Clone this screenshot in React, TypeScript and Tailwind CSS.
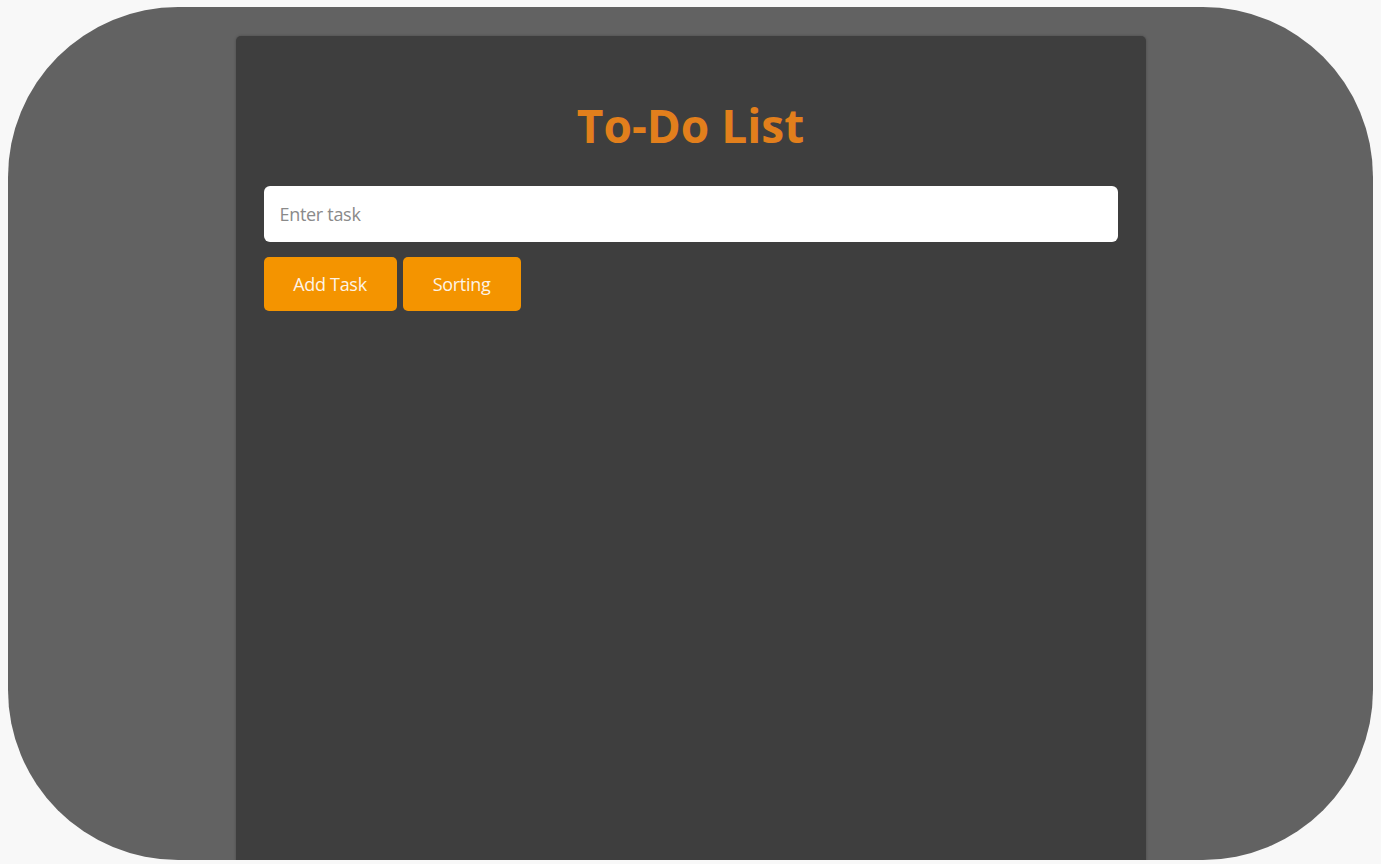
export default function App() {
  return (
    <div className="h-[864px] w-[1381px] overflow-hidden bg-[#f8f8f8] pl-2 pt-[7px] font-['Open_Sans',sans-serif]">
      <div className="flex h-[853px] w-[1365px] justify-center overflow-hidden rounded-[170px] bg-[#626262] pt-[29px]">
        <div className="h-[900px] w-[910px] shrink-0 rounded-t-[5px] bg-[#3e3e3e] px-7 pt-[63px] shadow-[0_0_3px_rgba(0,0,0,0.25)]">
          <h1 className="text-center text-[46px] font-bold leading-[52px] text-[#e27f1c]">To-Do List</h1>
          <input
            type="text"
            placeholder="Enter task"
            className="mt-[35px] h-[56px] w-full rounded-[6px] bg-white px-[16px] text-[18px] tracking-[-0.3px] text-[#333] outline-none placeholder:text-[#8a8a8a]"
          />
          <div className="mt-[15px] flex gap-[6px]">
            <button className="h-[54px] w-[133px] rounded-[5px] bg-[#f49400] text-[18px] tracking-[-0.3px] text-[#fdf3e6]">Add Task</button>
            <button className="h-[54px] w-[118px] rounded-[5px] bg-[#f49400] text-[18px] tracking-[-0.3px] text-[#fdf3e6]">Sorting</button>
          </div>
        </div>
      </div>
    </div>
  );
}
